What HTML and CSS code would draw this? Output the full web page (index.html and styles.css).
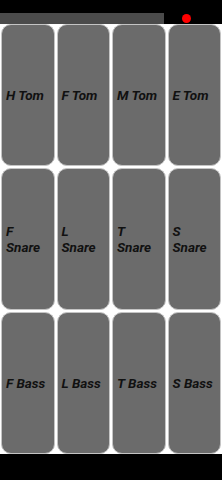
FILE: index.html
```html
<!DOCTYPE html>
<html lang="en">
<head>
    <meta charset="UTF-8">
    <title>Drum Pads</title>
    <link rel="stylesheet" href="styles.css">
</head>
<body>
    <div class="screen">
        <div class="status"></div>
        <div class="topbar">
            <div class="progress"></div>
            <div class="rec-slot"><span class="rec-dot"></span></div>
        </div>

        <div class="pads">
            <div class="pad">H Tom</div>
            <div class="pad">F Tom</div>
            <div class="pad">M Tom</div>
            <div class="pad">E Tom</div>

            <div class="pad">F Snare</div>
            <div class="pad">L Snare</div>
            <div class="pad">T Snare</div>
            <div class="pad">S Snare</div>

            <div class="pad">F Bass</div>
            <div class="pad">L Bass</div>
            <div class="pad">T Bass</div>
            <div class="pad">S Bass</div>
        </div>

        <div class="navbar"></div>
    </div>
</body>
</html>
```

FILE: styles.css
```css
body {
    margin: 0;
    background: #000;
    font-family: Roboto, "Liberation Sans", sans-serif;
}

.screen {
    width: 222px;
    height: 480px;
    display: flex;
    flex-direction: column;
    background: #000;
}

.status {
    height: 13px;
}

.topbar {
    height: 11px;
    display: flex;
}

.progress {
    width: 164px;
    background: #4b4b4b;
}

.rec-slot {
    flex: 1;
    display: flex;
    align-items: center;
    padding-left: 18px;
}

.rec-dot {
    width: 9px;
    height: 9px;
    border-radius: 50%;
    background: #f00;
}

.pads {
    height: 430px;
    background: #fff;
    display: grid;
    grid-template-columns: repeat(4, 1fr);
    grid-template-rows: repeat(3, 1fr);
    gap: 2px;
    padding: 0 1px 0 1px;
}

.pad {
    background: #6b6b6b;
    border: 1px solid #c4c4c4;
    border-radius: 10px;
    display: flex;
    align-items: center;
    padding: 0 4px;
    font-size: 13.5px;
    line-height: 16px;
    font-weight: bold;
    font-style: italic;
    color: #111;
}

.navbar {
    flex: 1;
    background: #000;
}
```
